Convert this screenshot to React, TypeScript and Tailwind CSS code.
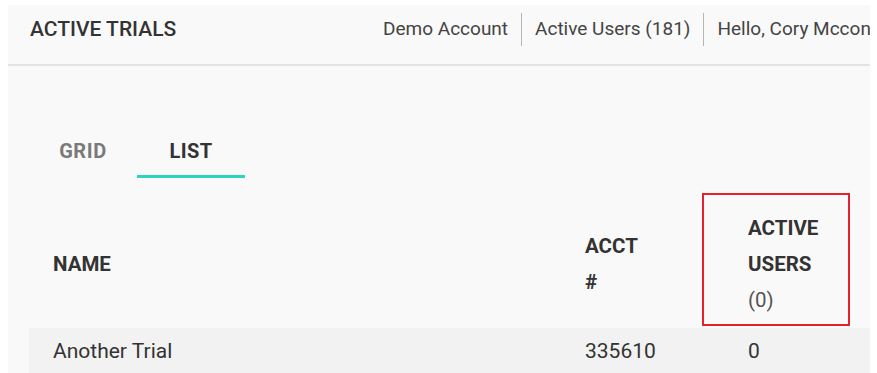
import React from 'react'

const rows = [{ name: 'Another Trial', acct: '335610', users: '0' }]

export default function App() {
  return (
    <div className="h-screen overflow-hidden bg-white pt-[5px] pl-[8px] pr-[7px] font-['Roboto',sans-serif]">
      <div className="h-full overflow-hidden bg-[#f9f9f9]">
        {/* Header */}
        <div className="flex h-[61px] items-center overflow-hidden whitespace-nowrap border-b-2 border-[#e3e3e3] pb-[10px] pl-[22px]">
          <div className="w-[353px] shrink-0 text-[21px] font-medium text-[#333]">ACTIVE TRIALS</div>
          <div className="flex shrink-0 items-center text-[19px] text-[#444]">
            <span>Demo Account</span>
            <span className="mx-[13px] h-[33px] w-px bg-[#b5b5b5]" />
            <span>Active Users (181)</span>
            <span className="mx-[13px] h-[33px] w-px bg-[#b5b5b5]" />
            <span>Hello, Cory Mcconnell</span>
          </div>
        </div>

        <div className="pl-[21px] pt-[57px]">
          {/* Tabs */}
          <div className="flex">
            <button className="flex h-[55px] w-[108px] items-center justify-center text-[20px] font-bold tracking-[0.6px] text-[#7a7a7a]">
              GRID
            </button>
            <button className="flex h-[55px] w-[108px] items-center justify-center border-b-[3px] border-[#2ed3c0] pt-[3px] text-[20px] font-bold tracking-[0.4px] text-[#333]">
              LIST
            </button>
          </div>

          {/* Table */}
          <table className="mt-[22px] w-full border-collapse text-left">
            <thead>
              <tr>
                <th className="w-[532px] px-[24px] py-[10px] align-middle text-[20.5px] font-bold leading-[36px] text-[#333]">NAME</th>
                <th className="w-[163px] px-[24px] py-[10px] align-middle text-[20.5px] font-bold leading-[36px] text-[#333]">
                  ACCT
                  <br />#
                </th>
                <th className="relative px-[24px] py-[10px] align-middle text-[20.5px] font-bold leading-[36px] text-[#333]">
                  ACTIVE
                  <br />
                  USERS
                  <br />
                  <span className="font-normal text-[#555]">(0)</span>
                  <div className="pointer-events-none absolute left-[-22px] top-[-7px] h-[133px] w-[148px] border-2 border-[#e8202e]" />
                </th>
              </tr>
            </thead>
            <tbody>
              {rows.map((r) => (
                <tr key={r.acct} className="bg-[#f2f2f2] text-[21px] text-[#333]">
                  <td className="px-[24px] pt-[8px] pb-[10px]">{r.name}</td>
                  <td className="px-[24px] pt-[8px] pb-[10px]">{r.acct}</td>
                  <td className="px-[24px] pt-[8px] pb-[10px]">{r.users}</td>
                </tr>
              ))}
            </tbody>
          </table>
        </div>
      </div>
    </div>
  )
}
